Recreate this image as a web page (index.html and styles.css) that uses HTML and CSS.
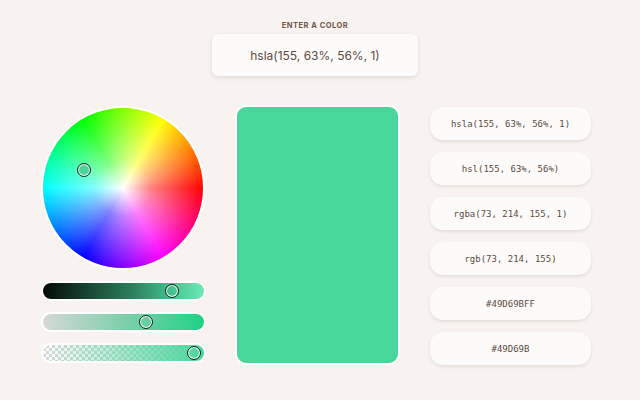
FILE: index.html
```html
<!DOCTYPE html>
<html lang="en">
<head>
<meta charset="utf-8">
<title>Color Picker</title>
<link rel="stylesheet" href="styles.css">
</head>
<body>
  <header class="entry">
    <label class="entry-label" for="color-input">Enter a color</label>
    <input class="entry-input" id="color-input" type="text" value="hsla(155, 63%, 56%, 1)">
  </header>

  <main class="picker">
    <section class="controls">
      <div class="wheel">
        <span class="handle wheel-handle"></span>
      </div>
      <div class="slider slider-light">
        <span class="handle" style="left: 80%"></span>
      </div>
      <div class="slider slider-sat">
        <span class="handle" style="left: 64%"></span>
      </div>
      <div class="slider slider-alpha">
        <span class="handle" style="left: 94%"></span>
      </div>
    </section>

    <section class="preview">
      <div class="swatch"></div>
    </section>

    <section class="formats">
      <button class="format">hsla(155, 63%, 56%, 1)</button>
      <button class="format">hsl(155, 63%, 56%)</button>
      <button class="format">rgba(73, 214, 155, 1)</button>
      <button class="format">rgb(73, 214, 155)</button>
      <button class="format">#49D69BFF</button>
      <button class="format">#49D69B</button>
    </section>
  </main>
</body>
</html>
```

FILE: styles.css
```css
* {
  box-sizing: border-box;
}

html, body {
  margin: 0;
  padding: 0;
}

body {
  width: 640px;
  height: 400px;
  overflow: hidden;
  background: #f8f3f0;
  font-family: Inter, "Noto Sans", sans-serif;
  color: #5b4a41;
}

/* top entry field */
.entry {
  display: flex;
  flex-direction: column;
  align-items: center;
  padding-top: 21px;
  margin-left: -10px;
}

.entry-label {
  font-size: 7.5px;
  font-weight: 700;
  letter-spacing: 0.5px;
  line-height: 9px;
  text-transform: uppercase;
  color: #6e574b;
}

.entry-input {
  margin-top: 4px;
  width: 206px;
  height: 42px;
  border: none;
  border-radius: 6px;
  background: #fdfbf9;
  box-shadow: 0 2px 4px rgba(90, 60, 40, 0.12), 0 0 1px rgba(90, 60, 40, 0.08);
  font-family: Inter, "Noto Sans", sans-serif;
  font-size: 12px;
  text-align: center;
  color: #5b4a41;
  outline: none;
}

/* three column layout */
.picker {
  display: grid;
  grid-template-columns: 164px 165px 161px;
  column-gap: 30px;
  align-items: start;
  margin-top: 29px;
  padding-left: 41px;
}

.controls {
  display: flex;
  flex-direction: column;
  gap: 11px;
  padding-top: 1px;
}

.wheel {
  position: relative;
  width: 164px;
  height: 164px;
  border-radius: 50%;
  border: 2px solid #ffffff;
  background:
    radial-gradient(circle closest-side, #ffffff 0%, rgba(255, 255, 255, 0.5) 35%, rgba(255, 255, 255, 0) 100%),
    conic-gradient(from 90deg, #ff0000, #ff00ff, #0000ff, #00ffff, #00ff00, #ffff00, #ff0000);
}

.handle {
  position: absolute;
  top: 50%;
  width: 14px;
  height: 14px;
  margin: -7px 0 0 -7px;
  border-radius: 50%;
  border: 1.5px solid #13231b;
  box-shadow: inset 0 0 0 1px #ffffff;
  background: transparent;
}

.wheel-handle {
  left: 41px;
  top: 62px;
  background: #49d69b;
}

.slider {
  position: relative;
  height: 20px;
  border-radius: 10px;
  border: 2px solid #ffffff;
  margin-right: -1px;
}

.slider-light {
  background: linear-gradient(90deg, #050a07, #2c7e5b 55%, #45c893 82%, #6fe9b5);
}

.slider-sat {
  background: linear-gradient(90deg, #d5d9d6, #7fcfaa 50%, #1fd385);
}

.slider-alpha {
  background:
    linear-gradient(90deg, rgba(73, 214, 155, 0), rgba(73, 214, 155, 1)),
    repeating-conic-gradient(#d7d7d7 0% 25%, #ffffff 0% 50%) 0 0 / 6px 6px;
}

.slider .handle {
  background: transparent;
}

/* preview swatch */
.preview {
  display: flex;
}

.swatch {
  width: 165px;
  height: 260px;
  border-radius: 11px;
  border: 2px solid #ffffff;
  background: #49d69b;
}

/* output formats */
.formats {
  display: flex;
  flex-direction: column;
  gap: 12px;
  padding-top: 2px;
}

.format {
  height: 33px;
  border: none;
  border-radius: 13px;
  background: #fdfbf9;
  box-shadow: 0 2px 3px rgba(90, 60, 40, 0.10), 0 0 1px rgba(90, 60, 40, 0.06);
  font-family: "DejaVu Sans Mono", monospace;
  font-size: 9px;
  color: #5b4a41;
  text-align: center;
  padding: 0;
}
```
